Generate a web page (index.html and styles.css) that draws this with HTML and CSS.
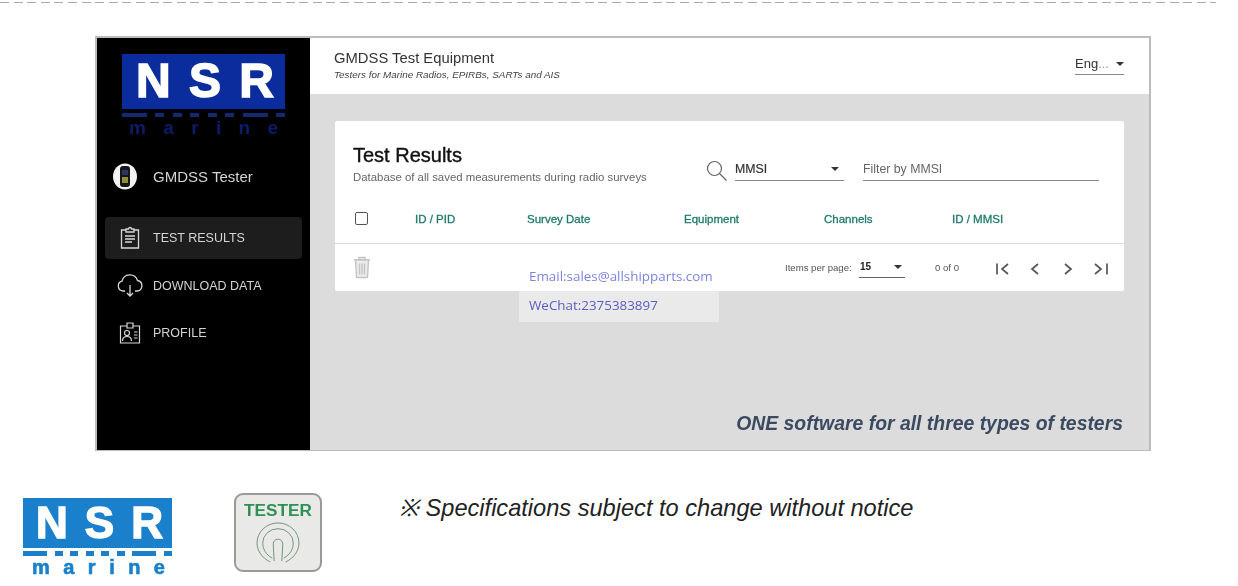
FILE: index.html
```html
<!DOCTYPE html>
<html lang="en">
<head>
  <meta charset="UTF-8">
  <title>GMDSS Test Equipment</title>
  <link rel="stylesheet" href="styles.css">
</head>
<body>

  <div class="dash-line"></div>

  <!-- App screenshot -->
  <div class="frame">
    <aside class="sidebar">
      <div class="logo logo-dark">
        <div class="logo-box"><span>N</span><span>S</span><span>R</span></div>
        <div class="logo-dashes"><i class="long"></i><i></i><i></i><i></i><i></i><i></i><i class="long"></i><i></i></div>
        <div class="logo-word"><span>m</span><span>a</span><span>r</span><span>i</span><span>n</span><span>e</span></div>
      </div>

      <div class="brand">
        <svg class="brand-icon" width="24" height="27" viewBox="0 0 24 27">
          <ellipse cx="12" cy="13.5" rx="12" ry="13" fill="#f2f2f2"/>
          <rect x="7" y="3" width="10" height="21" rx="3" fill="#15151c"/>
          <rect x="9" y="7" width="6" height="5" fill="#2c3560"/>
          <rect x="9" y="14" width="6" height="6" fill="#8f8f35"/>
        </svg>
        <span>GMDSS Tester</span>
      </div>

      <nav class="nav">
        <div class="nav-item active">
          <svg width="20" height="24" viewBox="0 0 20 24" fill="none" stroke="#d8d8d8" stroke-width="1.3">
            <path d="M6 4H1.500v18h17V4H14"/>
            <path d="M6 6V3h2.500a1.500 1.500 0 0 1 3 0H14v3z"/>
            <path d="M5 10h10M5 13h10M5 16h7"/>
          </svg>
          <span>TEST RESULTS</span>
        </div>
        <div class="nav-item">
          <svg width="26" height="24" viewBox="0 0 26 24" fill="none" stroke="#d8d8d8" stroke-width="1.3">
            <path d="M8 17H6a5 5 0 0 1-1-9.800A8 8 0 0 1 20.500 6.500 5.300 5.300 0 0 1 20 17h-2"/>
            <path d="M13 11v11M10 19l3 3 3-3"/>
          </svg>
          <span>DOWNLOAD DATA</span>
        </div>
        <div class="nav-item">
          <svg width="22" height="24" viewBox="0 0 22 24" fill="none" stroke="#d8d8d8" stroke-width="1.2">
            <path d="M8 5H1.500v17h19V5H14"/>
            <path d="M8 7V2h6v5z"/>
            <circle cx="8" cy="12" r="2.500"/>
            <path d="M3.500 20c0-6 9-6 9 0M15 11h3.500M15 14h3.500M15 17h3.500"/>
          </svg>
          <span>PROFILE</span>
        </div>
      </nav>
    </aside>

    <div class="content">
      <header class="topbar">
        <div>
          <div class="topbar-title">GMDSS Test Equipment</div>
          <div class="topbar-sub">Testers for Marine Radios, EPIRBs, SARTs and AIS</div>
        </div>
        <div class="lang"><span>Eng<em>...</em></span><b class="caret"></b></div>
      </header>

      <main class="main">
        <section class="card">
          <div class="card-head">
            <div class="card-titles">
              <h1>Test Results</h1>
              <p>Database of all saved measurements during radio surveys</p>
            </div>
            <svg class="search-icon" width="21" height="21" viewBox="0 0 21 21" fill="none" stroke="#666" stroke-width="1.200">
              <circle cx="8.500" cy="8.500" r="7"/>
              <path d="M13.500 13.500l7 7"/>
            </svg>
            <div class="field field-select"><span>MMSI</span><b class="caret"></b></div>
            <div class="field field-filter"><span>Filter by MMSI</span></div>
          </div>

          <div class="table-head">
            <span class="check"></span>
            <span>ID / PID</span>
            <span>Survey Date</span>
            <span>Equipment</span>
            <span>Channels</span>
            <span>ID / MMSI</span>
          </div>

          <div class="table-foot">
            <svg class="trash" width="18" height="23" viewBox="0 0 18 23" fill="#ececec" stroke="#c4c4c4" stroke-width="1.400">
              <path d="M1 4h16M6 4V1.500h6V4"/>
              <path d="M2.500 4l1 17.500h11l1-17.500z"/>
              <path d="M6.500 7.500v11M9 7.500v11M11.500 7.500v11"/>
            </svg>
            <div class="pager">
              <span class="pager-label">Items per page:</span>
              <div class="pager-size"><span>15</span><b class="caret"></b></div>
              <span class="pager-count">0 of 0</span>
              <svg width="112" height="16" viewBox="0 0 112 16" fill="none" stroke="#555" stroke-width="1.700">
                <path d="M1 2.500v11M12 3l-6 5 6 5"/>
                <path d="M42 3l-6 5 6 5"/>
                <path d="M69 3l6 5-6 5"/>
                <path d="M99 3l6 5-6 5M111 2.500v11"/>
              </svg>
            </div>
          </div>
        </section>
        <div class="slogan">ONE software for all three types of testers</div>
      </main>
    </div>

    <div class="contact">
      <div>Email:sales@allshipparts.com</div>
      <div class="contact-chat">WeChat:2375383897</div>
    </div>
  </div>

  <!-- Footer logos -->
  <footer class="foot">
    <div class="logo logo-light">
      <div class="logo-box"><span>N</span><span>S</span><span>R</span></div>
      <div class="logo-dashes"><i class="long"></i><i></i><i></i><i></i><i></i><i></i><i class="long"></i><i></i></div>
      <div class="logo-word"><span>m</span><span>a</span><span>r</span><span>i</span><span>n</span><span>e</span></div>
    </div>
    <div class="tester">
      <div class="tester-label">TESTER</div>
      <svg width="44" height="41" viewBox="0 0 46 43" fill="none" stroke="#6f9178" stroke-width="1">
        <path d="M15 42C5 37 1 29 1 22a22 21 0 0 1 44 0c0 7-4 15-14 20"/>
        <path d="M17 38C10 34 7 28 7 22a16 15 0 0 1 32 0c0 6-3 12-10 16"/>
        <path d="M19 41l-1-18a5 5 0 0 1 10 0l-1 18"/>
      </svg>
    </div>
    <p class="notice">※ Specifications subject to change without notice</p>
  </footer>

</body>
</html>
```

FILE: styles.css
```css
* { margin: 0; padding: 0; box-sizing: border-box; }
html, body { height: 586px; overflow: hidden; }
body { background: #fff; color: #222; font-family: "Liberation Sans", Arial, sans-serif; padding-top: 2px; }

.dash-line {
  width: 1216px;
  height: 1px;
  background: repeating-linear-gradient(90deg, #a8a8a8 0 9px, transparent 9px 13.6px);
}

.frame {
  position: relative;
  display: flex;
  width: 1056px;
  height: 415px;
  margin: 33px 0 0 95px;
  border: 2px solid #bcbcbc;
  border-bottom-width: 1px;
  filter: blur(.35px);
}

/* Logo */
.logo-box {
  display: flex;
  align-items: center;
  justify-content: space-between;
  color: #fff;
  font-weight: 700;
}
.logo-dashes { display: flex; justify-content: space-between; }
.logo-dashes i { display: block; }
.logo-word { display: flex; justify-content: space-between; font-weight: 700; }

.logo-dark { width: 163px; margin: 16px 0 0 25px; }
.logo-dark .logo-box {
  height: 55px;
  padding: 0 11px 2px 14px;
  background: #0a2c9c;
  font-size: 48px;
  -webkit-text-stroke: 1.500px #fff;
}
.logo-dark .logo-dashes { margin-top: 4px; }
.logo-dark .logo-dashes i { width: 9px; height: 4px; background: #142a70; }
.logo-dark .logo-dashes i.long { width: 25px; }
.logo-dark .logo-word { margin-top: 1px; padding: 0 7px; color: #0e1c66; font-size: 19px; line-height: 19px; }

.logo-light { width: 149px; }
.logo-light .logo-box {
  height: 50px;
  padding: 0 9px 0 13px;
  background: #1a80cc;
  font-size: 44px;
  -webkit-text-stroke: 1.500px #fff;
}
.logo-light .logo-dashes { margin-top: 3px; }
.logo-light .logo-dashes i { width: 8px; height: 5px; background: #1a80cc; }
.logo-light .logo-dashes i.long { width: 24px; }
.logo-light .logo-word {
  margin-top: 1px;
  padding: 0 7px 0 9px;
  color: #1a80cc;
  font-size: 20px;
  line-height: 20px;
  -webkit-text-stroke: .6px #1a80cc;
}

/* Sidebar */
.sidebar { width: 213px; flex-shrink: 0; background: #000; color: #d4d4d4; }
.brand {
  display: flex;
  align-items: center;
  gap: 16px;
  margin: 26px 0 0 16px;
  font-size: 15px;
}
.nav { margin: 27px 8px 0; }
.nav-item {
  display: flex;
  align-items: center;
  height: 42px;
  margin-bottom: 5.500px;
  padding-left: 12px;
  border-radius: 4px;
  font-size: 12.500px;
}
.nav-item svg { width: 26px; flex-shrink: 0; margin-right: 10px; }
.nav-item.active { background: #1d1d1d; }

/* Top bar */
.content { flex: 1; display: flex; flex-direction: column; }
.topbar {
  display: flex;
  justify-content: space-between;
  height: 56px;
  padding: 12px 25px 0 24px;
  background: #fff;
}
.topbar-title { font-size: 14.800px; color: #333; line-height: 16px; }
.topbar-sub { margin-top: 2px; font-size: 9.900px; font-style: italic; color: #444; line-height: 14px; }
.lang {
  display: flex;
  align-items: center;
  justify-content: space-between;
  width: 49px;
  height: 22px;
  margin-top: 3px;
  border-bottom: 1px solid #888;
  font-size: 13px;
  color: #333;
}
.lang em { font-style: normal; color: #999; }

.caret {
  display: block;
  width: 0;
  height: 0;
  border: 4px solid transparent;
  border-top-color: #333;
  border-bottom-width: 0;
}

/* Main */
.main { flex: 1; display: flex; flex-direction: column; background: #dcdcdc; padding: 27px 25px 0; }
.card { height: 170px; background: #fff; border-radius: 2px; }
.card-head { display: flex; align-items: flex-start; height: 72px; padding: 0 25px 0 18px; }
.card-titles { width: 353px; padding-top: 23px; }
.card-titles h1 { font-size: 20px; font-weight: 400; line-height: 22px; color: #111; -webkit-text-stroke: .4px #111; }
.card-titles p { margin-top: 4px; font-size: 11.400px; line-height: 14px; color: #666; }
.search-icon { margin-top: 39px; flex-shrink: 0; }
.field {
  display: flex;
  align-items: center;
  height: 20px;
  padding-bottom: 3px;
  border-bottom: 1px solid #888;
  font-size: 12.300px;
}
.field-select {
  justify-content: space-between;
  width: 109px;
  margin: 40px 19px 0 8px;
  padding-right: 5px;
  color: #333;
  -webkit-text-stroke: .2px #333;
}
.field-filter { flex: 1; margin-top: 40px; color: #666; }

.table-head {
  display: grid;
  grid-template-columns: 60px 112px 157px 140px 128px 1fr;
  align-items: center;
  height: 51px;
  padding: 1px 0 0 20px;
  border-bottom: 1px solid #dedede;
  color: #1f7a6c;
  font-size: 11.500px;
  -webkit-text-stroke: .3px #1f7a6c;
}
.check { width: 13px; height: 13px; border: 1.500px solid #555; border-radius: 2px; }

.table-foot { display: flex; justify-content: space-between; height: 47px; padding: 12px 16px 0 18px; }
.pager { display: flex; align-items: flex-start; height: 24px; font-size: 9.600px; color: #555; }
.pager-label { width: 74px; padding-top: 6px; }
.pager-size {
  display: flex;
  align-items: center;
  justify-content: space-between;
  width: 46px;
  height: 22px;
  padding: 0 3px 0 1px;
  border-bottom: 1px solid #666;
  color: #222;
  font-size: 10px;
  font-weight: 700;
}
.pager-count { width: 91px; padding: 6px 0 0 30px; }
.pager svg { margin-top: 5px; }

.slogan {
  margin-top: auto;
  padding: 0 1px 15px 0;
  text-align: right;
  color: #3b4a60;
  font-size: 19.400px;
  font-style: italic;
  font-weight: 700;
}

/* Watermark over the card */
.contact {
  position: absolute;
  left: 422px;
  top: 224px;
  width: 200px;
  height: 60px;
  padding: 5px 10px;
  background: rgba(255, 255, 255, .4);
  font-family: "Open Sans", sans-serif;
  font-size: 13.400px;
  color: #7c84e0;
}
.contact-chat { margin-top: 11px; color: #5c5cc4; }

/* Footer */
.foot { display: flex; align-items: flex-start; margin: 42px 0 0 23px; }
.foot .logo { margin-top: 5px; filter: blur(.3px); }
.tester {
  display: flex;
  flex-direction: column;
  align-items: center;
  width: 88px;
  height: 79px;
  margin-left: 62px;
  border: 2px solid #999;
  border-radius: 9px;
  background: #e9e9e7;
  filter: blur(.3px);
}
.tester-label { margin-top: 6px; font-size: 17.200px; font-weight: 700; color: #2f8f55; line-height: 18px; }
.tester svg { margin-top: 3px; }
.notice { margin: -2px 0 0 77px; font-size: 23.600px; font-style: italic; color: #222; }
```
